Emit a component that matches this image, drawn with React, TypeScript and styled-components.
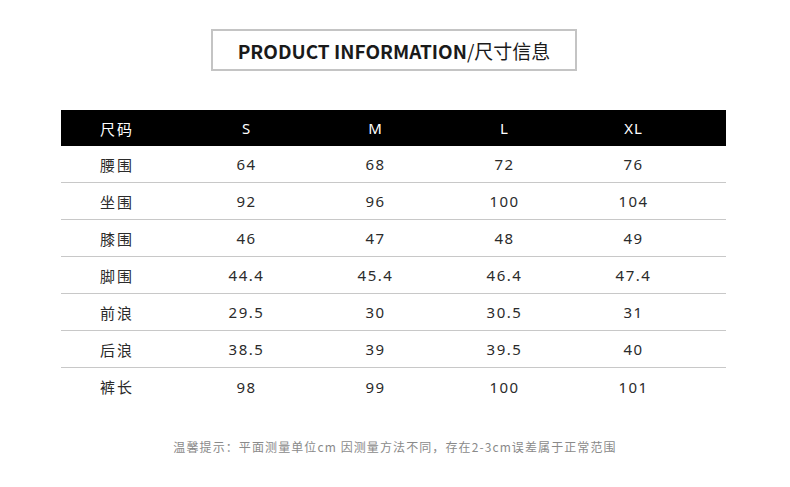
import React from "react";
import styled, { createGlobalStyle } from "styled-components";

const GlobalStyle = createGlobalStyle`
  html, body {
    margin: 0;
    padding: 0;
    background: #ffffff;
  }
  body {
    font-family: "Noto Sans", "Noto Sans CJK SC", sans-serif;
  }
`;

const Page = styled.div`
  width: 790px;
  height: 487px;
  display: flex;
  flex-direction: column;
  align-items: center;
  padding-top: 29px;
  box-sizing: border-box;
`;

const TitleBox = styled.div`
  width: 366px;
  height: 42px;
  margin-right: 2px;
  box-sizing: border-box;
  border: 2px solid #c4c4c4;
  display: flex;
  align-items: center;
  justify-content: center;
  font-size: 19px;
  color: #1a1a1a;
`;

const TitleBold = styled.span`
  font-family: "Noto Sans CJK SC", sans-serif;
  font-weight: 700;
`;

const TitleCn = styled.span`
  font-family: "Noto Sans CJK SC", sans-serif;
  font-weight: 400;
`;

const Table = styled.div`
  margin-top: 39px;
  width: 665px;
  margin-right: 3px;
  display: flex;
  flex-direction: column;
`;

const Row = styled.div<{ $head?: boolean; $last?: boolean }>`
  display: grid;
  grid-template-columns: 121px repeat(4, 129px) 1fr;
  align-items: center;
  height: ${(p) => (p.$head ? "36px" : "37px")};
  box-sizing: border-box;
  background: ${(p) => (p.$head ? "#000000" : "transparent")};
  color: ${(p) => (p.$head ? "#ffffff" : "#2b2b2b")};
  border-bottom: ${(p) => (p.$head || p.$last ? "none" : "1px solid #c8c8c8")};
  font-size: 15px;
`;

const Label = styled.div`
  padding-left: 39px;
  font-family: "Noto Sans CJK SC", sans-serif;
  letter-spacing: 2px;
`;

const Cell = styled.div<{ $head?: boolean }>`
  text-align: center;
  font-family: "Noto Sans", "Noto Sans CJK SC", sans-serif;
  letter-spacing: ${(p) => (p.$head ? "1px" : "1.5px")};
`;

const Note = styled.div`
  margin-top: 33px;
  font-family: "Noto Sans CJK SC", sans-serif;
  font-size: 12px;
  letter-spacing: 1.1px;
  color: #8a8a8a;
`;

const sizes = ["S", "M", "L", "XL"];

const rows: { name: string; values: string[] }[] = [
  { name: "腰围", values: ["64", "68", "72", "76"] },
  { name: "坐围", values: ["92", "96", "100", "104"] },
  { name: "膝围", values: ["46", "47", "48", "49"] },
  { name: "脚围", values: ["44.4", "45.4", "46.4", "47.4"] },
  { name: "前浪", values: ["29.5", "30", "30.5", "31"] },
  { name: "后浪", values: ["38.5", "39", "39.5", "40"] },
  { name: "裤长", values: ["98", "99", "100", "101"] },
];

const App: React.FC = () => {
  return (
    <>
      <GlobalStyle />
      <Page>
        <TitleBox>
          <TitleBold>PRODUCT INFORMATION</TitleBold>
          <TitleCn>/尺寸信息</TitleCn>
        </TitleBox>
        <Table>
          <Row $head>
            <Label>尺码</Label>
            {sizes.map((s) => (
              <Cell $head key={s}>
                {s}
              </Cell>
            ))}
          </Row>
          {rows.map((r, i) => (
            <Row key={r.name} $last={i === rows.length - 1}>
              <Label>{r.name}</Label>
              {r.values.map((v, j) => (
                <Cell key={j}>{v}</Cell>
              ))}
            </Row>
          ))}
        </Table>
        <Note>
          温馨提示：平面测量单位cm 因测量方法不同，存在2-3cm误差属于正常范围
        </Note>
      </Page>
    </>
  );
};

export default App;
